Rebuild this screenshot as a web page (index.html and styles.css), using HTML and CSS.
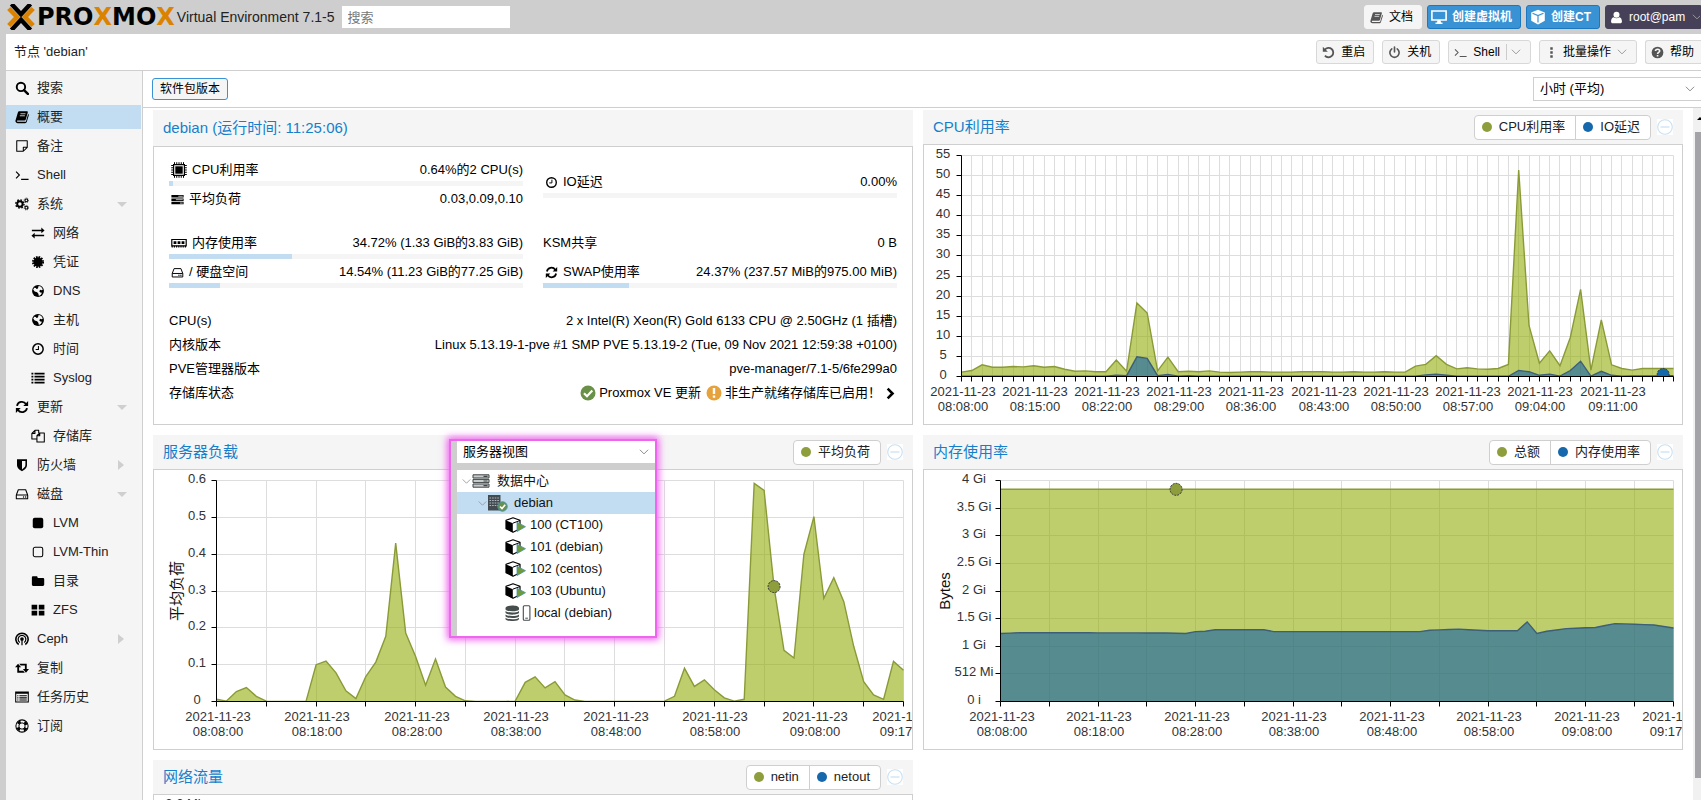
FILE: index.html
```html
<!DOCTYPE html>
<html lang="zh-CN">
<head>
<meta charset="utf-8">
<title>debian - Proxmox Virtual Environment</title>
<link rel="stylesheet" href="styles.css">
</head>
<body>
<svg class="sprite" aria-hidden="true">
  <symbol id="i-search" viewBox="0 0 16 16"><circle cx="6.8" cy="6.8" r="4.8" fill="none" stroke="currentColor" stroke-width="2.2"/><path d="M10.3 10.3l4.4 4.4" stroke="currentColor" stroke-width="2.8" stroke-linecap="round"/></symbol>
  <symbol id="i-book" viewBox="0 0 16 16"><path fill="currentColor" d="M5.2 1.500h8.300c.9 0 1.300.6 1.100 1.400l-2.300 8c-.2.7-.8 1.100-1.500 1.100H3.200c-.8 0-1 .4-.9.8.1.5.6.7 1.200.7h8.300c.4 0 .7-.2.8-.6L15 4.600c.7.3 1 .8.8 1.500l-2.300 7.400c-.3.9-1 1.500-1.900 1.500H3.200C1.700 15 .5 13.800.4 12.500L3.200 3c.3-1 1-1.500 2-1.500z"/><path stroke="#f5f5f5" stroke-width=".9" d="M6.200 4.300h5.800M5.500 6.600h5.800"/></symbol>
  <symbol id="i-note" viewBox="0 0 16 16"><path fill="none" stroke="currentColor" stroke-width="1.200" stroke-linejoin="round" d="M2 2h12v7.500L9.500 14H2zM14 9.500H9.500V14"/></symbol>
  <symbol id="i-term" viewBox="0 0 16 16"><path fill="none" stroke="currentColor" stroke-width="1.300" d="M1.200 4.200L5 8l-3.800 3.800M7 13h8.500"/></symbol>
  <symbol id="i-cogs" viewBox="0 0 16 16"><circle cx="5.600" cy="8" r="3.100" fill="none" stroke="currentColor" stroke-width="2.200"/><circle cx="5.600" cy="8" r="4.700" fill="none" stroke="currentColor" stroke-width="1.600" stroke-dasharray="1.900 1.790"/><circle cx="13" cy="3.800" r="1.600" fill="none" stroke="currentColor" stroke-width="1.200"/><circle cx="13" cy="3.800" r="2.600" fill="none" stroke="currentColor" stroke-width=".8" stroke-dasharray="1.100 .94"/><circle cx="13" cy="12.200" r="1.600" fill="none" stroke="currentColor" stroke-width="1.200"/><circle cx="13" cy="12.200" r="2.600" fill="none" stroke="currentColor" stroke-width=".8" stroke-dasharray="1.100 .94"/></symbol>
  <symbol id="i-exchange" viewBox="0 0 16 16"><path fill="currentColor" d="M1 4.200h10.800V1.800L15.500 5l-3.700 3.200V5.900H1zM15 10.100H4.200V7.800L.5 11l3.700 3.200v-2.400H15z"/></symbol>
  <symbol id="i-cert" viewBox="0 0 16 16"><circle cx="8" cy="8" r="5.300" fill="currentColor"/><circle cx="8" cy="8" r="5.800" fill="none" stroke="currentColor" stroke-width="2.200" stroke-dasharray="1.840 1.197"/></symbol>
  <symbol id="i-globe" viewBox="0 0 16 16"><circle cx="8" cy="8" r="6.800" fill="currentColor"/><path fill="#f5f5f5" d="M8.700 2.300c2.200.2 4.200 1.800 4.800 4l-1.300.9-1.600-.5-1.200 1.500 1.300 1.600 1.800.2-1.200 2.200-2.300 1.600-.6-2.600L7 9.300l-2.800-.8L2.500 6.200l1.300-2 1.700.3.800 1.200 1.600-.7z"/></symbol>
  <symbol id="i-clock" viewBox="0 0 16 16"><circle cx="8" cy="8" r="5.900" fill="none" stroke="currentColor" stroke-width="1.700"/><path fill="none" stroke="currentColor" stroke-width="1.200" d="M8.500 4.500v4H5.300"/></symbol>
  <symbol id="i-list" viewBox="0 0 16 16"><path stroke="currentColor" stroke-width="2" d="M.5 3h2.200M4 3h11.500M.5 6.400h2.200M4 6.400h11.500M.5 9.800h2.200M4 9.800h11.500M.5 13.200h2.200M4 13.200h11.500"/></symbol>
  <symbol id="i-refresh" viewBox="0 0 16 16"><path fill="none" stroke="currentColor" stroke-width="2.100" d="M2.300 6.800A5.700 5.700 0 0 1 12.600 4.600M13.700 9.200A5.700 5.700 0 0 1 3.400 11.400"/><path fill="currentColor" d="M15 1.200v5.600H9.400zM1 14.800V9.200h5.600z"/></symbol>
  <symbol id="i-files" viewBox="0 0 16 16"><path fill="none" stroke="currentColor" stroke-width="1.200" stroke-linejoin="round" d="M6.800 11.500H1V5l3.500-3.500h4.300v3M4.500 1.500V5H1M10 4.500h5.200v10.300H6.800V7.700zM10 4.500v3.200H6.800"/></symbol>
  <symbol id="i-shield" viewBox="0 0 16 16"><path fill="currentColor" fill-rule="evenodd" d="M2.300 1.500h11.400v6.700c0 3.400-3.600 5.700-5.700 6.800-2.100-1.100-5.700-3.400-5.700-6.800zM8 3.300v9.700c1.600-1 3.900-2.600 3.900-4.900V3.300z"/></symbol>
  <symbol id="i-hdd" viewBox="0 0 16 16"><path fill="none" stroke="currentColor" stroke-width="1.200" stroke-linejoin="round" d="M1.500 9.200L3.800 3.200h8.400l2.300 6M1.500 9.200h13v4.300h-13z"/><circle cx="9.800" cy="11.400" r=".8" fill="currentColor"/><circle cx="12.200" cy="11.400" r=".8" fill="currentColor"/></symbol>
  <symbol id="i-sqf" viewBox="0 0 16 16"><rect x="2" y="2" width="12" height="12" rx="2.200" fill="currentColor"/></symbol>
  <symbol id="i-sqo" viewBox="0 0 16 16"><rect x="2.600" y="2.600" width="10.800" height="10.800" rx="2" fill="none" stroke="currentColor" stroke-width="1.200"/></symbol>
  <symbol id="i-folder" viewBox="0 0 16 16"><path fill="currentColor" d="M1 4c0-.9.600-1.500 1.500-1.500h3.600c.9 0 1.500.6 1.500 1.500v.7h6c.9 0 1.500.6 1.500 1.500v5.900c0 .9-.6 1.500-1.500 1.500H2.500C1.600 13.600 1 13 1 12.100z"/></symbol>
  <symbol id="i-grid" viewBox="0 0 16 16"><path fill="currentColor" d="M.7 2h6.400v5.400H.7zM8.900 2h6.400v5.400H8.900zM.7 8.900h6.400v5.400H.7zM8.900 8.900h6.400v5.400H8.900z"/></symbol>
  <symbol id="i-ceph" viewBox="0 0 16 16"><g fill="none" stroke="currentColor"><path stroke-width="1.800" d="M4.200 14.300A7 7 0 1 1 11.800 14.300"/><path stroke-width="1.400" d="M5.500 11.900A4.400 4.400 0 1 1 10.500 11.900M8 8v7"/></g><circle cx="8" cy="8" r="2.100" fill="currentColor"/></symbol>
  <symbol id="i-retweet" viewBox="0 0 16 16"><path fill="currentColor" d="M3.500 3L7 7.200H4.700v4h4.800l1.700 2.100H2.600V7.200H0zM12.500 13.300L9 9.100h2.300v-4H6.500L4.800 3h8.600v6.100H16z"/></symbol>
  <symbol id="i-listalt" viewBox="0 0 16 16"><path fill="none" stroke="currentColor" stroke-width="1.200" d="M.8 2.400h14.400v11.200H.8z"/><path stroke="currentColor" stroke-width="2" d="M.8 3.300h14.400"/><path stroke="currentColor" stroke-width="1.200" d="M2.600 6.500h1.300M5 6.500h8.500M2.600 9h1.300M5 9h8.500M2.600 11.400h1.300M5 11.400h8.500"/></symbol>
  <symbol id="i-ring" viewBox="0 0 16 16"><circle cx="8" cy="8" r="5.200" fill="none" stroke="currentColor" stroke-width="3" stroke-dasharray="3.600 4.568" stroke-dashoffset="-2.284"/><circle cx="8" cy="8" r="7" fill="none" stroke="currentColor" stroke-width="1.200"/><circle cx="8" cy="8" r="3.600" fill="none" stroke="currentColor" stroke-width="1.100"/></symbol>
  <symbol id="i-undo" viewBox="0 0 16 16"><path fill="none" stroke="currentColor" stroke-width="2.200" d="M3.400 4.600A5.800 5.800 0 1 1 3.600 11.800"/><path fill="currentColor" d="M1 1v6.200h6.200z"/></symbol>
  <symbol id="i-power" viewBox="0 0 16 16"><path fill="none" stroke="currentColor" stroke-width="2" stroke-linecap="round" d="M4.700 3.600a5.700 5.700 0 1 0 6.600 0M8 1.300v6"/></symbol>
  <symbol id="i-dots" viewBox="0 0 16 16"><path fill="currentColor" d="M6.500 1.500h3v3h-3zM6.500 6.500h3v3h-3zM6.500 11.500h3v3h-3z"/></symbol>
  <symbol id="i-help" viewBox="0 0 16 16"><circle cx="8" cy="8" r="7.200" fill="currentColor"/><path fill="none" stroke="#f5f5f5" stroke-width="2" d="M5.500 6.200c.1-3 5.200-3 5.200 0 0 1.700-2.600 1.700-2.600 3.500M8.100 11v2"/></symbol>
  <symbol id="i-desktop" viewBox="0 0 16 16"><path fill="none" stroke="currentColor" stroke-width="1.600" d="M.9 2h14.200v9H.9z"/><path fill="currentColor" d="M6.500 11h3l.5 2.500h1.500V15h-7v-1.500H6z"/></symbol>
  <symbol id="i-cubew" viewBox="0 0 16 16"><path fill="currentColor" d="M8 .8l6.800 2.600v8.400L8 15.400 1.200 11.800V3.400z"/><path fill="none" stroke="#3892d4" stroke-width="1.200" d="M2.500 4.300L8 6.500l5.500-2.200M8 6.500v7"/></symbol>
  <symbol id="i-user" viewBox="0 0 16 16"><circle cx="8" cy="4.600" r="3.700" fill="currentColor"/><path fill="currentColor" d="M4.600 7.600c2 1.700 4.800 1.700 6.800 0 2.400.4 3.300 3 3.300 5.300 0 1.300-.8 2.200-2 2.200H3.300c-1.200 0-2-.9-2-2.200 0-2.300.9-4.900 3.300-5.300z"/></symbol>
  <symbol id="i-down" viewBox="0 0 16 16"><path fill="none" stroke="currentColor" stroke-width="1.300" d="M2.500 5L8 10.500 13.500 5"/></symbol>
  <symbol id="i-cpu" viewBox="0 0 16 16"><path fill="none" stroke="currentColor" stroke-width="1.200" d="M2.600 2.600h10.800v10.800H2.600z"/><path fill="currentColor" d="M4.300 4.300h7.400v7.400H4.300z"/><path stroke="currentColor" stroke-width="1" d="M3.500.2v2.500M5.750.2v2.500M8 .2v2.500M10.250.2v2.500M12.500.2v2.500M3.500 13.300v2.500M5.750 13.300v2.500M8 13.300v2.500M10.250 13.300v2.500M12.500 13.300v2.500M.2 3.500h2.500M.2 5.750h2.500M.2 8h2.500M.2 10.250h2.500M.2 12.500h2.500M13.300 3.500h2.500M13.300 5.750h2.500M13.300 8h2.500M13.300 10.250h2.500M13.300 12.500h2.500"/></symbol>
  <symbol id="i-tasks" viewBox="0 0 16 16"><path fill="currentColor" d="M.5 2.500h15v3H.5zM.5 6.700h15v3H.5zM.5 10.900h15v3H.5z"/><path stroke="#bbb" stroke-width="1.200" d="M9 4h5.500M6 8.200h8.500M11 12.400h3.500"/></symbol>
  <symbol id="i-mem" viewBox="0 0 16 16"><path fill="none" stroke="currentColor" stroke-width="1.200" d="M.8 4.500h14.400v6.300H.8z"/><path fill="currentColor" d="M2.600 6.200h2.800v2.900H2.600zM6.600 6.200h2.800v2.900H6.600zM10.600 6.200h2.800v2.900h-2.800z"/><path stroke="currentColor" stroke-width="1.800" stroke-dasharray="1.200 1" d="M.6 11.600h14.800"/></symbol>
  <symbol id="i-check" viewBox="0 0 16 16"><circle cx="8" cy="8" r="7.500" fill="#6a9148"/><path fill="none" stroke="#fff" stroke-width="2.200" d="M4 8.200l3 3 5.300-5.600"/></symbol>
  <symbol id="i-warn" viewBox="0 0 16 16"><circle cx="8" cy="8" r="7.500" fill="#e6a23c"/><path stroke="#fff" stroke-width="2.400" d="M8 3v6M8 10.500v2.300"/></symbol>
  <symbol id="i-right" viewBox="0 0 16 16"><path fill="none" stroke="currentColor" stroke-width="3.200" d="M4.500 2l6 6-6 6"/></symbol>
  <symbol id="i-minus" viewBox="0 0 16 16"><path fill="#fff" d="M0 0h16v16H0z"/><circle cx="8" cy="8" r="7.300" fill="none" stroke="#c9e0f2" stroke-width="1.100"/><path stroke="#c9e0f2" stroke-width="1.200" d="M3.500 8h9"/></symbol>
  <symbol id="i-server" viewBox="0 0 18 14"><g fill="#c8cccc" stroke="#3f4444" stroke-width="1"><path d="M1 .8h16v3.200H1zM1 5.400h16v3.200H1zM1 10h16v3.200H1z"/></g><path stroke="#3f4444" stroke-width="1.200" d="M11.500 2.400h4M11.500 7h4M11.500 11.600h4"/></symbol>
  <symbol id="i-node" viewBox="0 0 20 17"><path fill="#444b50" d="M0 0h12.500v15.500H0z"/><path stroke="#aeb8c0" stroke-width="1.100" stroke-dasharray="1.600 1" d="M1.500 3h10M1.500 5.500h10M1.500 8h10M1.500 10.500h10"/><circle cx="14.500" cy="11.500" r="4.700" fill="#6a9148" stroke="#4a90a8"/><path fill="none" stroke="#fff" stroke-width="1.600" d="M12 11.500l2 2 3.200-3.800"/></symbol>
  <symbol id="i-vm" viewBox="0 0 21 16"><path fill="#fff" stroke="#000" stroke-width="1.200" stroke-linejoin="round" d="M8 .8l7 2.500v8.400l-7 3.500-7-3.500V3.300z"/><path d="M1 3.500l6.800 2.700v9L1 11.700z"/><path fill="none" stroke="#000" d="M7.800 6.200L15 3.500"/><path fill="#6f9a3a" stroke="#4b93a6" stroke-width=".8" d="M12 5.200l8.500 4.500L12 14.500z"/></symbol>
  <symbol id="i-db" viewBox="0 0 26 16"><path fill="#464d4d" d="M.5 3c0-3.300 13.500-3.300 13.500 0v1.200C14 7 .5 7 .5 4.200zM.5 6c2 2 11.500 2 13.500 0v1.600c0 2.700-13.500 2.700-13.500 0zM.5 9.400c2 2 11.500 2 13.500 0V11c0 2.700-13.500 2.700-13.500 0zM.5 12.700c2 2 11.500 2 13.500 0V14c0 2.700-13.500 2.700-13.500 0z"/><rect x="18.300" y=".7" width="6.600" height="14.600" rx="1" fill="#fff" stroke="#444b50" stroke-width="1.100"/><path stroke="#444b50" d="M20.300 13.200h2.600"/></symbol>
</svg>

<div class="app">
  <header class="top">
    <svg class="mark" viewBox="0 0 28 26" aria-hidden="true"><g fill="none" stroke="#db8300" stroke-width="4.600"><path d="M1.800 4.500L10 13l-8.200 8.500M26.200 4.500L18 13l8.200 8.500"/></g><g fill="none" stroke="#000" stroke-width="4.400"><path d="M4.500 0L14 10.200 23.500 0M4.500 26L14 15.800 23.500 26"/></g></svg>
    <span class="word">PRO<b>X</b>MO<b>X</b></span>
    <span class="version">Virtual Environment 7.1-5</span>
    <input class="find" type="text" placeholder="搜索" aria-label="搜索">
    <div class="top-actions">
      <button class="btn light"><svg class="ic"><use href="#i-book"/></svg>文档</button>
      <button class="btn blue"><svg class="ic big"><use href="#i-desktop"/></svg>创建虚拟机</button>
      <button class="btn blue"><svg class="ic"><use href="#i-cubew"/></svg>创建CT</button>
      <button class="btn user"><svg class="ic"><use href="#i-user"/></svg>root@pam<svg class="chev"><use href="#i-down"/></svg></button>
    </div>
  </header>

  <div class="work">
    <div class="nodebar">
      <span class="nodename">节点 'debian'</span>
      <div class="node-actions">
        <button class="btn"><svg class="ic"><use href="#i-undo"/></svg>重启</button>
        <button class="btn"><svg class="ic"><use href="#i-power"/></svg>关机</button>
        <button class="btn split"><svg class="ic"><use href="#i-term"/></svg>Shell<span class="sep"></span><svg class="chev"><use href="#i-down"/></svg></button>
        <button class="btn menu"><svg class="ic"><use href="#i-dots"/></svg>批量操作<svg class="chev"><use href="#i-down"/></svg></button>
        <button class="btn edge"><svg class="ic"><use href="#i-help"/></svg>帮助</button>
      </div>
    </div>

    <div class="columns">
      <nav class="side">
        <a href="#"><svg class="ic"><use href="#i-search"/></svg>搜索</a>
        <a href="#" class="on"><svg class="ic"><use href="#i-book"/></svg>概要</a>
        <a href="#"><svg class="ic"><use href="#i-note"/></svg>备注</a>
        <a href="#"><svg class="ic"><use href="#i-term"/></svg>Shell</a>
        <a href="#" class="open"><svg class="ic"><use href="#i-cogs"/></svg>系统</a>
        <a href="#" class="sub"><svg class="ic"><use href="#i-exchange"/></svg>网络</a>
        <a href="#" class="sub"><svg class="ic"><use href="#i-cert"/></svg>凭证</a>
        <a href="#" class="sub"><svg class="ic"><use href="#i-globe"/></svg>DNS</a>
        <a href="#" class="sub"><svg class="ic"><use href="#i-globe"/></svg>主机</a>
        <a href="#" class="sub"><svg class="ic"><use href="#i-clock"/></svg>时间</a>
        <a href="#" class="sub"><svg class="ic"><use href="#i-list"/></svg>Syslog</a>
        <a href="#" class="open"><svg class="ic"><use href="#i-refresh"/></svg>更新</a>
        <a href="#" class="sub"><svg class="ic"><use href="#i-files"/></svg>存储库</a>
        <a href="#" class="shut"><svg class="ic"><use href="#i-shield"/></svg>防火墙</a>
        <a href="#" class="open"><svg class="ic"><use href="#i-hdd"/></svg>磁盘</a>
        <a href="#" class="sub"><svg class="ic"><use href="#i-sqf"/></svg>LVM</a>
        <a href="#" class="sub"><svg class="ic"><use href="#i-sqo"/></svg>LVM-Thin</a>
        <a href="#" class="sub"><svg class="ic"><use href="#i-folder"/></svg>目录</a>
        <a href="#" class="sub"><svg class="ic"><use href="#i-grid"/></svg>ZFS</a>
        <a href="#" class="shut"><svg class="ic"><use href="#i-ceph"/></svg>Ceph</a>
        <a href="#"><svg class="ic"><use href="#i-retweet"/></svg>复制</a>
        <a href="#"><svg class="ic"><use href="#i-listalt"/></svg>任务历史</a>
        <a href="#"><svg class="ic"><use href="#i-ring"/></svg>订阅</a>
      </nav>

      <main class="main">
        <div class="toolbar">
          <button class="btn focus">软件包版本</button>
          <div class="combo range"><select aria-label="时间范围"><option>小时 (平均)</option></select><svg class="chev"><use href="#i-down"/></svg></div>
        </div>
        <div class="scroll">
          <div class="grid">
            <section class="panel">
              <header class="phead tall"><h2>debian (运行时间: 11:25:06)</h2></header>
              <div class="pbody status">
                <div class="gauges">
                  <div class="pair">
                    <div class="gauge"><div class="line"><span class="lab"><svg class="ic big"><use href="#i-cpu"/></svg>CPU利用率</span><span>0.64%的2 CPU(s)</span></div><div class="bar"><i style="width:1%"></i></div></div>
                    <div class="gauge"><div class="line"><span class="lab"><svg class="ic"><use href="#i-tasks"/></svg>平均负荷</span><span>0.03,0.09,0.10</span></div></div>
                  </div>
                  <div class="pair lone">
                    <div class="gauge"><div class="line"><span class="lab"><svg class="ic"><use href="#i-clock"/></svg>IO延迟</span><span>0.00%</span></div><div class="bar"></div></div>
                  </div>
                  <div class="pair">
                    <div class="gauge"><div class="line"><span class="lab"><svg class="ic big"><use href="#i-mem"/></svg>内存使用率</span><span>34.72% (1.33 GiB的3.83 GiB)</span></div><div class="bar"><i style="width:34.72%"></i></div></div>
                    <div class="gauge"><div class="line"><span class="lab"><svg class="ic"><use href="#i-hdd"/></svg>/ 硬盘空间</span><span>14.54% (11.23 GiB的77.25 GiB)</span></div><div class="bar"><i style="width:14.54%"></i></div></div>
                  </div>
                  <div class="pair">
                    <div class="gauge"><div class="line"><span>KSM共享</span><span>0 B</span></div></div>
                    <div class="gauge"><div class="line"><span class="lab"><svg class="ic"><use href="#i-refresh"/></svg>SWAP使用率</span><span>24.37% (237.57 MiB的975.00 MiB)</span></div><div class="bar"><i style="width:24.37%"></i></div></div>
                  </div>
                </div>
                <dl class="facts">
                  <div><dt>CPU(s)</dt><dd>2 x Intel(R) Xeon(R) Gold 6133 CPU @ 2.50GHz (1 插槽)</dd></div>
                  <div><dt>内核版本</dt><dd>Linux 5.13.19-1-pve #1 SMP PVE 5.13.19-2 (Tue, 09 Nov 2021 12:59:38 +0100)</dd></div>
                  <div><dt>PVE管理器版本</dt><dd>pve-manager/7.1-5/6fe299a0</dd></div>
                  <div><dt>存储库状态</dt><dd class="repo"><svg class="ic big"><use href="#i-check"/></svg><span>Proxmox VE 更新</span><svg class="ic big"><use href="#i-warn"/></svg><span>非生产就绪存储库已启用！</span><svg class="ic"><use href="#i-right"/></svg></dd></div>
                </dl>
              </div>
            </section>

            <section class="panel">
              <header class="phead"><h2>CPU利用率</h2>
                <div class="legend"><button><i class="dot"></i>CPU利用率</button><button><i class="dot b"></i>IO延迟</button></div>
                <button class="tool" aria-label="折叠"><svg><use href="#i-minus"/></svg></button>
              </header>
              <div class="pbody"><svg class="chart" data-chart="cpu"></svg></div>
            </section>

            <section class="panel">
              <header class="phead"><h2>服务器负载</h2>
                <div class="legend"><button><i class="dot"></i>平均负荷</button></div>
                <button class="tool" aria-label="折叠"><svg><use href="#i-minus"/></svg></button>
              </header>
              <div class="pbody"><svg class="chart" data-chart="load"></svg></div>
              <div class="tree">
                <div class="combo view"><select aria-label="视图"><option>服务器视图</option></select><svg class="chev"><use href="#i-down"/></svg></div>
                <ul>
                  <li><svg class="chev"><use href="#i-down"/></svg><svg class="t-srv"><use href="#i-server"/></svg>数据中心</li>
                  <li class="l1 on"><svg class="chev"><use href="#i-down"/></svg><svg class="t-node"><use href="#i-node"/></svg>debian</li>
                  <li class="l2"><svg class="t-vm"><use href="#i-vm"/></svg>100 (CT100)</li>
                  <li class="l2"><svg class="t-vm"><use href="#i-vm"/></svg>101 (debian)</li>
                  <li class="l2"><svg class="t-vm"><use href="#i-vm"/></svg>102 (centos)</li>
                  <li class="l2"><svg class="t-vm"><use href="#i-vm"/></svg>103 (Ubuntu)</li>
                  <li class="l2"><svg class="t-db"><use href="#i-db"/></svg>local (debian)</li>
                </ul>
              </div>
            </section>

            <section class="panel">
              <header class="phead"><h2>内存使用率</h2>
                <div class="legend"><button><i class="dot"></i>总额</button><button><i class="dot b"></i>内存使用率</button></div>
                <button class="tool" aria-label="折叠"><svg><use href="#i-minus"/></svg></button>
              </header>
              <div class="pbody"><svg class="chart" data-chart="memory"></svg></div>
            </section>

            <section class="panel">
              <header class="phead"><h2>网络流量</h2>
                <div class="legend"><button><i class="dot"></i>netin</button><button><i class="dot b"></i>netout</button></div>
                <button class="tool" aria-label="折叠"><svg><use href="#i-minus"/></svg></button>
              </header>
              <div class="pbody"><svg class="chart" data-chart="net"></svg></div>
            </section>
          </div>
          <div class="track"><svg viewBox="0 0 8 8" aria-hidden="true"><path d="M4 6l3-3 3 3z"/></svg><div class="thumb"></div></div>
        </div>
      </main>
    </div>
  </div>
</div>
<script src="charts.js"></script>
</body>
</html>
```

FILE: styles.css
```css
* { box-sizing: border-box; }
html, body { height: 100%; }
body {
  margin: 0;
  overflow: hidden;
  background: #cecece;
  color: #000;
  font: 13px/20px "Liberation Sans", "Noto Sans CJK SC", sans-serif;
}
button, input, select { font: inherit; color: inherit; margin: 0; }
a { color: inherit; text-decoration: none; }
.sprite { position: absolute; width: 0; height: 0; }
.ic { width: 13px; height: 13px; flex: none; }
.ic.big { width: 16px; height: 16px; }
.chev { width: 12px; height: 12px; flex: none; color: #999; }

.app { display: flex; flex-direction: column; height: 100vh; }

/* top bar */
.top { display: flex; align-items: center; height: 34px; padding-left: 7px; flex: none; }
.mark { width: 28px; height: 26px; margin-right: 2px; flex: none; }
.word { font: bold 24px/26px "DejaVu Sans", sans-serif; flex: none; }
.word b { color: #db8300; }
.version { margin: 0 7px 0 2px; font-size: 14px; color: #222; white-space: nowrap; }
.find { width: 168px; height: 22px; border: 0; padding: 0 6px; background: #fff; border-radius: 0; }
.find::placeholder { color: #777; opacity: 1; }
.top-actions { display: flex; gap: 5px; margin-left: auto; }

.btn {
  display: flex;
  align-items: center;
  gap: 6px;
  height: 24px;
  padding: 0 8px 0 5px;
  border: 1px solid #d8d8d8;
  border-radius: 3px;
  background: #f5f5f5;
  font-size: 12px;
  line-height: 20px;
  white-space: nowrap;
}
.btn .ic { color: #555; }
.btn.light { border-color: #f5f5f5; }
.btn.blue { gap: 5px; padding: 0 8px 0 3px; background: #3892d4; border-color: #1b77c0; color: #fff; font-weight: bold; }
.btn.blue .ic { width: 16px; height: 16px; color: #fff; }
.btn.user { width: 96px; padding: 0 0 0 4px; background: #464158; border-color: #464158; border-radius: 3px 0 0 3px; color: #fff; overflow: hidden; }
.btn.user .ic { color: #fff; }
.btn.split .sep { width: 1px; height: 16px; background: #ccc; margin-right: -3px; }
.btn.menu { gap: 5px; }
.btn.edge { width: 56px; padding-right: 0; border-right: 0; border-radius: 3px 0 0 3px; }

/* node bar */
.work { display: flex; flex-direction: column; flex: 1; min-height: 0; margin-left: 6px; background: #fff; }
.nodebar { display: flex; align-items: center; height: 37px; padding-left: 8px; border-bottom: 1px solid #cfcfcf; flex: none; }
.nodename { color: #222; }
.node-actions { display: flex; gap: 8px; margin-left: auto; }

.columns { display: flex; flex: 1; min-height: 0; }

/* side menu */
.side { display: flex; flex-direction: column; gap: 5px; width: 137px; padding: 5px 1px 0 0; background: #f5f5f5; border-right: 1px solid #cfcfcf; flex: none; overflow: hidden; }
.side a { display: flex; align-items: center; gap: 8px; height: 24px; padding: 0 14px 0 9px; flex: none; color: #222; }
.side .ic { width: 14px; height: 14px; color: #000; }
.side a.sub { padding-left: 25px; }
.side a.on { background: #c2ddf2; }
.side a.open::after, .side a.shut::after { content: ""; margin-left: auto; border: 5px solid transparent; }
.side a.open::after { border-top-color: #cfcfcf; border-bottom: 0; }
.side a.shut::after { border-left: 6px solid #cfcfcf; border-right: 0; margin-right: 3px; }

/* main */
.main { display: flex; flex-direction: column; flex: 1; min-width: 0; }
.toolbar { display: flex; align-items: center; height: 37px; padding-left: 9px; border-bottom: 1px solid #cfcfcf; flex: none; }
.btn.focus { height: 22px; padding: 0 7px; border-color: #3892d4; }
.combo { position: relative; display: flex; align-items: center; background: #fff; }
.combo select { appearance: none; width: 100%; height: 100%; border: 0; background: transparent; padding: 0 6px; border-radius: 0; }
.combo .chev { position: absolute; right: 5px; color: #888; pointer-events: none; }
.combo.range { width: 168px; height: 24px; margin-left: auto; border: 1px solid #cfcfcf; border-right: 0; }

.scroll { display: flex; flex: 1; min-height: 0; overflow: hidden; }
.grid { display: grid; grid-template-columns: minmax(0, 1fr) minmax(0, 1fr); grid-auto-rows: min-content; gap: 10px; flex: 1; padding: 2px 10px 0; min-width: 0; }
.track { width: 8px; padding-top: 6px; background: #f1f1f1; flex: none; overflow: hidden; }
.track svg { display: block; width: 8px; height: 8px; }
.thumb { width: 6px; height: 646px; margin: 10px 0 0 2px; background: #a3a3a8; }

.panel { position: relative; display: flex; flex-direction: column; min-width: 0; }
.phead { display: flex; align-items: center; gap: 6px; height: 34px; padding: 0 10px; background: #f5f5f5; flex: none; }
.phead.tall { height: 36px; }
.phead h2 { flex: 1; margin: 0; font-size: 15px; font-weight: normal; color: #157fcc; white-space: nowrap; }
.pbody { flex: 1; border: 1px solid #cfcfcf; background: #fff; overflow: hidden; }
.legend { display: flex; height: 25px; border: 1px solid #cfcfcf; border-radius: 4px; background: #fff; }
.legend button { display: flex; align-items: center; gap: 7px; padding: 0 10px 0 7px; border: 0; background: none; color: #222; white-space: nowrap; }
.legend button + button { border-left: 1px solid #cfcfcf; }
.dot { width: 10px; height: 10px; border-radius: 50%; background: #8e9e3c; }
.dot.b { background: #1568ac; }
.tool { width: 16px; height: 16px; padding: 0; border: 0; background: none; }
.tool svg { display: block; width: 16px; height: 16px; }

/* node status */
.status { padding: 13px 15px 0; }
.gauges { display: grid; grid-template-columns: 1fr 1fr; gap: 15px 20px; }
.gauge { height: 29px; }
.pair.lone { padding-top: 12px; }
.line { display: flex; justify-content: space-between; white-space: nowrap; }
.lab { display: flex; align-items: center; gap: 5px; padding-left: 2px; }
.bar { height: 5px; margin-top: 1px; background: #f5f5f5; }
.bar i { display: block; height: 5px; background: #c2ddf2; }
.facts { margin: 18px 0 0; }
.facts div { display: flex; justify-content: space-between; height: 24px; line-height: 24px; white-space: nowrap; }
.facts dd { margin: 0; }
.repo { display: flex; align-items: center; gap: 3px; }
.repo span + .ic.big { margin-left: 2px; }

.chart { display: block; width: 100%; height: 279px; font-size: 13px; fill: #333; }

/* floating resource tree */
.tree {
  position: absolute;
  left: 298px;
  top: 6px;
  width: 204px;
  padding-left: 6px;
  background: #cecece;
  box-shadow: 0 0 0 2px #ee66ee, 0 0 7px 4px #ee66ee;
}
.combo.view { height: 22px; }
.tree ul { margin: 7px 0 0; padding: 0 0 12px; list-style: none; background: #fff; }
.tree li { display: flex; align-items: center; height: 22px; padding-left: 4px; white-space: nowrap; color: #111; line-height: 22px; }
.tree li.on { background: #c2ddf2; }
.tree li.l1 { padding-left: 20px; }
.tree li.l2 { padding-left: 48px; }
.tree li .chev { width: 11px; height: 11px; }
.t-srv { width: 18px; height: 14px; margin-right: 7px; }
.t-node { width: 20px; height: 17px; margin-right: 6px; }
.t-vm { width: 21px; height: 16px; margin-right: 4px; }
.t-db { width: 26px; height: 16px; margin-right: 3px; }
```

FILE: charts.js
```js
const NS = "http://www.w3.org/2000/svg";
const LAST = 69; // minutes between 08:08 and 09:17
const TOP = 10.5, BOTTOM = 231.5;
const GREEN = { fill: "#94ae0a", line: "#8b9a37" };
const BLUE = { fill: "#115fa6", line: "#3d5f78" };

const fill = (n, v) => Array(n).fill(v);

// expands [minute, value] pairs into one value per minute
function lerp(points) {
  const out = [];
  for (let i = 0; i < points.length - 1; i++) {
    const [a, va] = points[i], [b, vb] = points[i + 1];
    for (let m = a; m < b; m++) out[m] = va + (vb - va) * (m - a) / (b - a);
  }
  out[LAST] = points[points.length - 1][1];
  return out;
}

const charts = {
  cpu: {
    left: 37.5, labelX: 19, max: 55, grid: 1, label: 7,
    yLabels: [0, 5, 10, 15, 20, 25, 30, 35, 40, 45, 50, 55],
    series: [
      { color: GREEN, data: [1.1, 1.5, 2.9, 2.3, 2.3, 2.5, 2.4, 2.7, 2.3, 2.5, 1.8, 1.3, 1.4, 1.2, 1.2, 4.1, 1.3, 18.3, 15.8, 1.4, 4.8, 1.2, 1.3, 1.2, 1.4, 1.1, 1, 1.1, 1.2, 1.2, 1.1, 1.1, 1.1, 1.2, 1.2, 1.2, 1.1, 1.1, 1.2, 1.1, 1.1, 1.2, 1.1, 1.1, 2.6, 3, 5.2, 3, 1.9, 2.2, 1.9, 1.8, 2, 3, 51.4, 12.7, 3.3, 6.4, 2.7, 9.7, 21.7, 1.6, 14.1, 2.9, 2, 1.6, 2, 2, 2, 2] },
      { color: BLUE, data: lerp([[0, .05], [14, .05], [15, .3], [16, .2], [17, 4.9], [18, 4.5], [19, .2], [20, .5], [21, .1], [22, .2], [23, .05], [44, .1], [45, .4], [46, .6], [47, .3], [48, .05], [53, .05], [54, 1.5], [55, 1.2], [56, .3], [57, .6], [58, .1], [59, 1.5], [60, 3.8], [61, .1], [62, 1.3], [63, .3], [64, .1], [69, .2]]) }
    ],
    marker: { at: 68, value: .5, color: "#1568ac" }
  },
  load: {
    left: 62.5, labelX: 43, titleX: 23, title: "平均负荷", max: .6, grid: 5, label: 10, tail: true,
    yLabels: ["0", "0.1", "0.2", "0.3", "0.4", "0.5", "0.6"],
    series: [
      { color: GREEN, data: [.006, .001, .027, .038, .014, .001, 0, 0, 0, .001, .1, .11, .078, .029, .008, .068, .107, .177, .43, .186, .122, .044, .115, .039, .014, .002, 0, 0, 0, 0, .001, .052, .067, .037, .054, .018, .004, ...fill(8, 0), .001, .014, .09, .041, .059, .032, .01, .001, .006, .592, .573, .31, .139, .118, .4, .502, .28, .336, .271, .15, .054, .018, .006, .109, .085] }
    ],
    marker: { at: 56, value: .312, color: "#8e9e3c" }
  },
  memory: {
    left: 76.5, labelX: 50, titleX: 21, title: "Bytes", max: 4, grid: 5, label: 10, tail: true,
    yLabels: ["0 i", "512 Mi", "1 Gi", "1.5 Gi", "2 Gi", "2.5 Gi", "3 Gi", "3.5 Gi", "4 Gi"],
    series: [
      { color: GREEN, data: fill(LAST + 1, 3.84) },
      { color: BLUE, data: lerp([[0, 1.23], [2, 1.245], [17, 1.24], [19, 1.23], [20, 1.265], [21, 1.27], [22, 1.3], [27, 1.3], [28, 1.265], [43, 1.265], [44, 1.29], [47, 1.31], [50, 1.28], [53, 1.28], [54, 1.44], [55, 1.23], [56, 1.27], [58, 1.32], [61, 1.34], [63, 1.41], [67, 1.385], [69, 1.33]]) }
    ],
    marker: { at: 18, value: 3.84, color: "#8e9e3c" }
  },
  net: {
    left: 76.5, labelX: 29, max: 2.2, grid: 5, label: 10, tail: true,
    yLabels: ["0", "200 ki", "400 ki", "600 ki", "800 ki", "1 Mi", "1.2 Mi", "1.4 Mi", "1.6 Mi", "1.8 Mi", "2 Mi", "2.2 Mi"],
    series: [{ color: GREEN, data: fill(LAST + 1, .1) }]
  }
};

function add(parent, name, attrs, text) {
  const el = document.createElementNS(NS, name);
  for (const key in attrs) el.setAttribute(key, attrs[key]);
  if (text !== undefined) el.textContent = text;
  parent.appendChild(el);
  return el;
}

function clock(minute) {
  const t = 8 * 60 + 8 + minute;
  const two = n => String(n).padStart(2, "0");
  return two(Math.floor(t / 60)) + ":" + two(t % 60) + ":00";
}

function draw(svg) {
  const id = svg.dataset.chart, c = charts[id];
  svg.replaceChildren();
  const right = svg.clientWidth - 8.5;
  const x = m => c.left + (right - c.left) * m / LAST;
  const y = v => BOTTOM - (BOTTOM - TOP) * v / c.max;
  const snap = n => Math.floor(n) + .5;

  let lines = "";
  const ticks = [];
  for (let m = 0; m <= LAST; m += c.grid) ticks.push(m);
  if (c.tail) ticks.push(LAST);
  ticks.forEach(m => { lines += `M${snap(x(m))} ${TOP}V${BOTTOM}`; });
  c.yLabels.forEach((_, i) => { lines += `M${c.left} ${snap(y(c.max * i / (c.yLabels.length - 1)))}H${right}`; });
  add(svg, "path", { d: lines, stroke: "#dddddd", fill: "none" });

  const clip = add(svg, "clipPath", { id: "clip-" + id });
  add(clip, "rect", { x: c.left, y: 0, width: right - c.left + 1, height: BOTTOM });
  const plot = add(svg, "g", { "clip-path": `url(#clip-${id})` });
  c.series.forEach(s => {
    const path = s.data.map((v, m) => `${m ? "L" : "M"}${x(m).toFixed(1)} ${y(v).toFixed(1)}`).join("");
    add(plot, "path", { d: `${path}V${BOTTOM}H${c.left}Z`, fill: s.color.fill, "fill-opacity": .6 });
    add(plot, "path", { d: path, fill: "none", stroke: s.color.line, "stroke-width": 1.4 });
  });
  if (c.marker) {
    add(plot, "circle", { cx: x(c.marker.at), cy: y(c.marker.value), r: 6, fill: c.marker.color, stroke: "#33333a", "stroke-dasharray": "2 1" });
  }

  let axis = `M${c.left} ${TOP}V${BOTTOM}H${right}`;
  ticks.forEach(m => { axis += `M${snap(x(m))} ${BOTTOM}v5`; });
  c.yLabels.forEach((_, i) => { axis += `M${c.left} ${snap(y(c.max * i / (c.yLabels.length - 1)))}h-5`; });
  add(svg, "path", { d: axis, stroke: "#000", fill: "none" });

  c.yLabels.forEach((label, i) => {
    add(svg, "text", { x: c.labelX, y: Math.floor(y(c.max * i / (c.yLabels.length - 1)) + 3), "text-anchor": "middle" }, label);
  });
  const labels = [];
  for (let m = 0; m <= LAST - 5; m += c.label) labels.push(m);
  if (c.tail) labels.push(LAST);
  labels.forEach(m => {
    add(svg, "text", { x: Math.round(x(m)) + 1, y: 251, "text-anchor": "middle" }, "2021-11-23");
    add(svg, "text", { x: Math.round(x(m)) + 1, y: 266, "text-anchor": "middle" }, clock(m));
  });
  if (c.title) {
    add(svg, "text", { transform: `translate(${c.titleX + 5} 121) rotate(-90)`, "text-anchor": "middle", "font-size": 15, fill: "#111" }, c.title);
  }
}

const drawAll = () => document.querySelectorAll(".chart").forEach(draw);
drawAll();
window.addEventListener("resize", drawAll);
```
